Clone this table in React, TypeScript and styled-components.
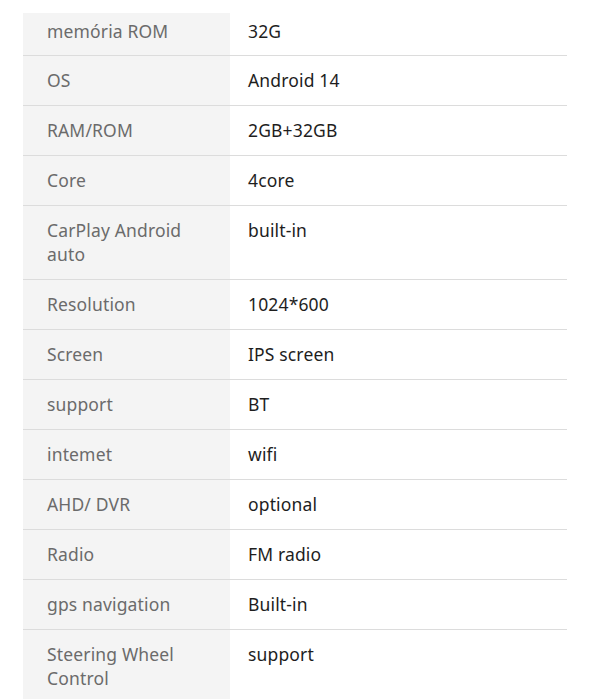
import styled, { createGlobalStyle } from 'styled-components';

const specs: [string, string][] = [
  ['memória ROM', '32G'],
  ['OS', 'Android 14'],
  ['RAM/ROM', '2GB+32GB'],
  ['Core', '4core'],
  ['CarPlay Android auto', 'built-in'],
  ['Resolution', '1024*600'],
  ['Screen', 'IPS screen'],
  ['support', 'BT'],
  ['intemet', 'wifi'],
  ['AHD/ DVR', 'optional'],
  ['Radio', 'FM radio'],
  ['gps navigation', 'Built-in'],
  ['Steering Wheel Control', 'support'],
];

export default function App() {
  return (
    <>
      <GlobalStyle />
      <Table>
        {specs.map(([label, value], i) => (
          <Row key={label} $first={i === 0} $last={i === specs.length - 1}>
            <Label>{label}</Label>
            <Value>{value}</Value>
          </Row>
        ))}
      </Table>
    </>
  );
}

const GlobalStyle = createGlobalStyle`
  html, body {
    margin: 0;
    background: #fff;
    overflow: hidden;
  }
  body {
    font-family: 'Noto Sans', 'Open Sans', sans-serif;
  }
`;

const Table = styled.div`
  margin: 13px 22px 0 23px;
  display: flex;
  flex-direction: column;
`;

const Row = styled.div<{ $first?: boolean; $last?: boolean }>`
  display: grid;
  grid-template-columns: 207px 1fr;
  border-bottom: ${(p) => (p.$last ? 'none' : '1px solid #dcdcdc')};
  font-size: 17.5px;
  line-height: 24px;
  letter-spacing: 0.15px;

  & > div {
    padding-top: ${(p) => (p.$first ? '6px' : '12px')};
    padding-bottom: ${(p) => (p.$first ? '12px' : '13px')};
  }
`;

const Label = styled.div`
  background: #f4f4f4;
  color: #6b6b6b;
  padding-left: 24px;
  padding-right: 16px;
`;

const Value = styled.div`
  color: #1e1e1e;
  padding-left: 18px;
  padding-right: 16px;
`;
